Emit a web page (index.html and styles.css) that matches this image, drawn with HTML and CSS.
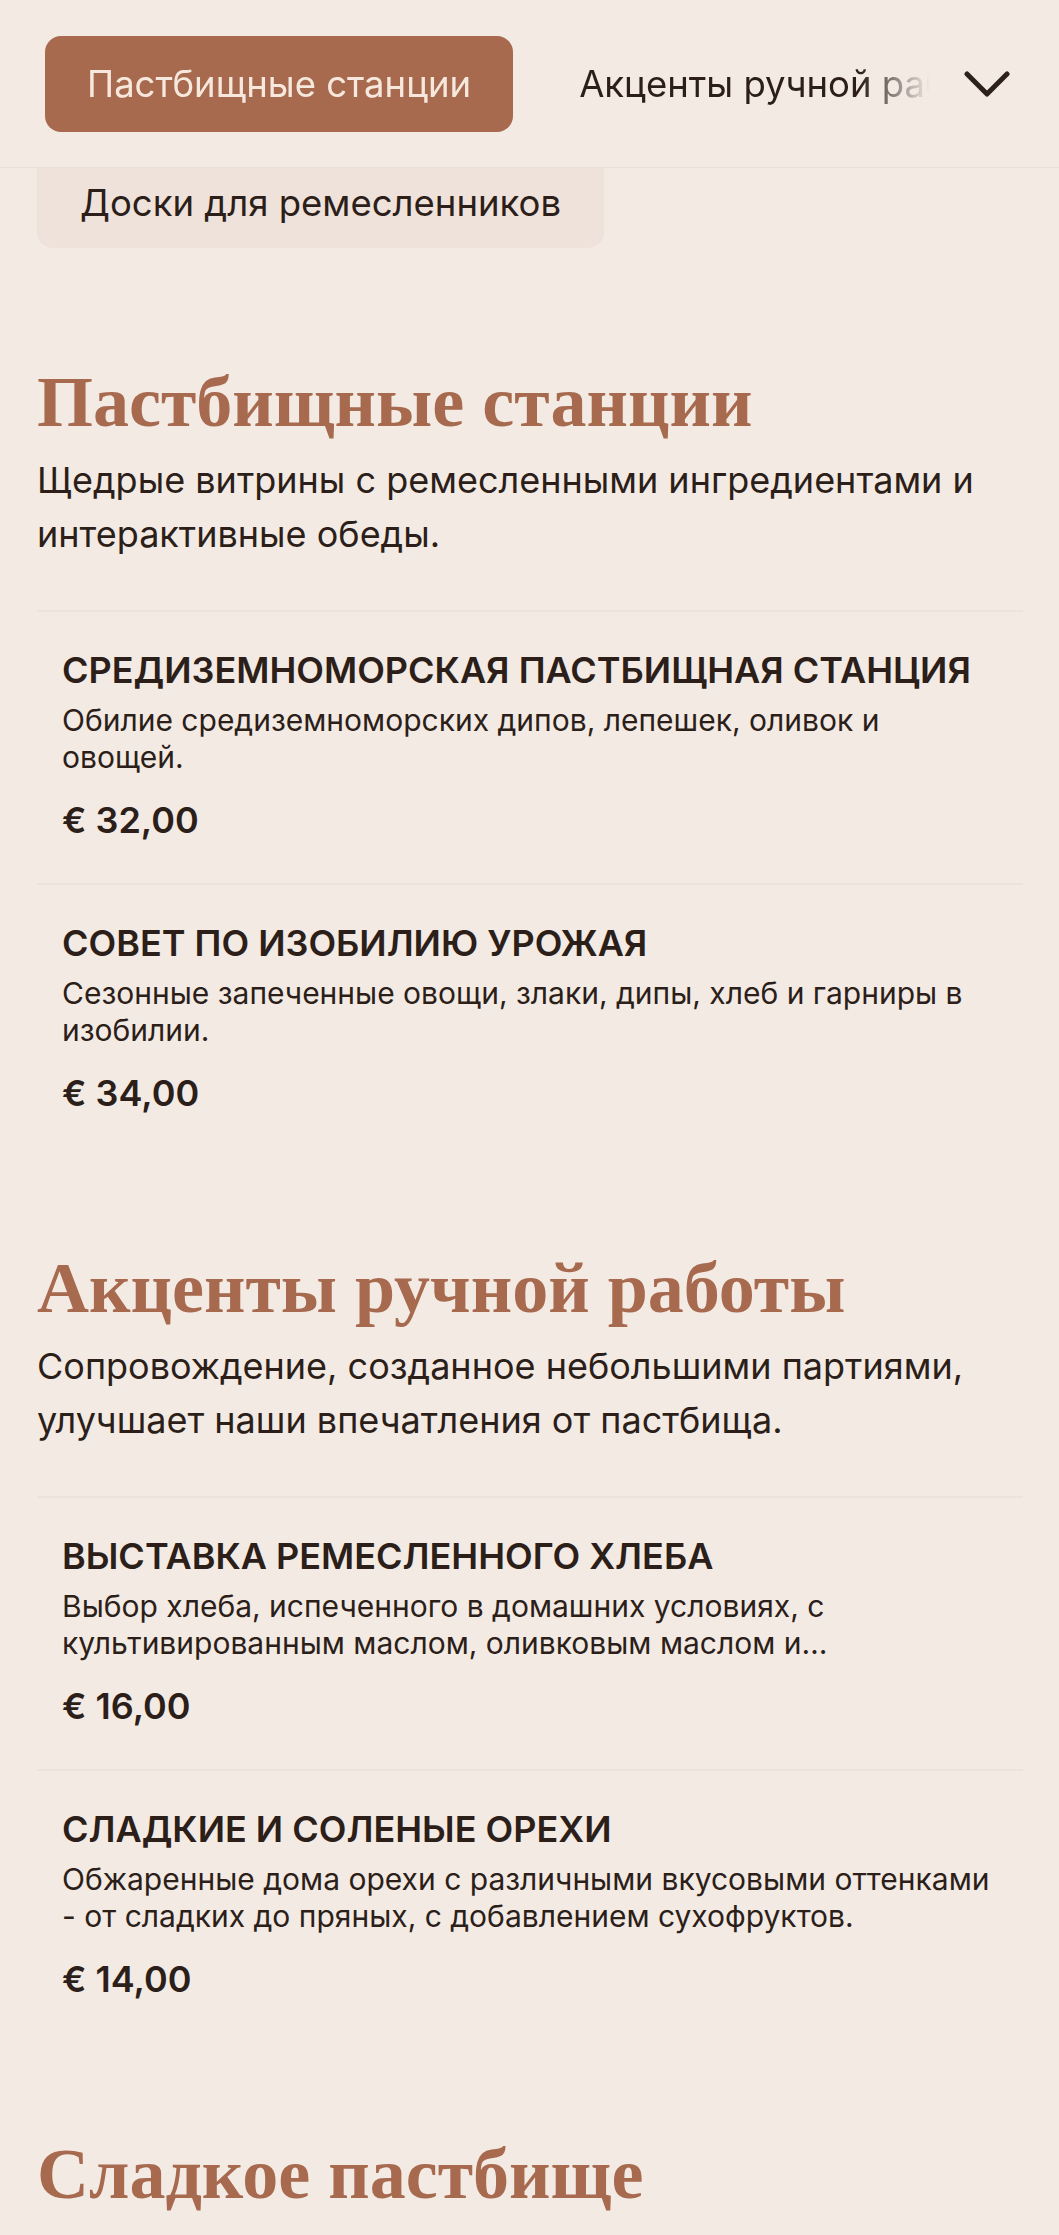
FILE: index.html
```html
<!DOCTYPE html>
<html lang="ru">
<head>
<meta charset="utf-8">
<title>Меню</title>
<link rel="stylesheet" href="styles.css">
</head>
<body>
<header class="topbar">
  <nav class="tabs">
    <a class="tab tab-active">Пастбищные станции</a>
    <a class="tab">Акценты ручной работы</a>
    <a class="tab">Сладкое пастбище</a>
  </nav>
  <button class="chevron" aria-label="Все категории">
    <svg width="46" height="28" viewBox="0 0 46 28"><polyline points="3,4 23,24 43,4" fill="none" stroke="#2e211c" stroke-width="5" stroke-linecap="round" stroke-linejoin="round"/></svg>
  </button>
</header>
<div class="dropdown">
  <a class="dropdown-item">Доски для ремесленников</a>
</div>
<main class="menu">
  <section class="section">
    <h2 class="section-title">Пастбищные станции</h2>
    <p class="section-desc">Щедрые витрины с ремесленными ингредиентами и интерактивные обеды.</p>
    <ul class="items">
      <li class="item">
        <h3 class="item-title">Средиземноморская пастбищная станция</h3>
        <p class="item-desc">Обилие средиземноморских дипов, лепешек, оливок и овощей.</p>
        <p class="item-price">€ 32,00</p>
      </li>
      <li class="item">
        <h3 class="item-title">Совет по изобилию урожая</h3>
        <p class="item-desc">Сезонные запеченные овощи, злаки, дипы, хлеб и гарниры в изобилии.</p>
        <p class="item-price">€ 34,00</p>
      </li>
    </ul>
  </section>
  <section class="section">
    <h2 class="section-title">Акценты ручной работы</h2>
    <p class="section-desc">Сопровождение, созданное небольшими партиями, улучшает наши впечатления от пастбища.</p>
    <ul class="items">
      <li class="item">
        <h3 class="item-title">Выставка ремесленного хлеба</h3>
        <p class="item-desc clamp">Выбор хлеба, испеченного в домашних условиях, с культивированным маслом, оливковым маслом и бальзамическим уксусом.</p>
        <p class="item-price">€ 16,00</p>
      </li>
      <li class="item">
        <h3 class="item-title">Сладкие и соленые орехи</h3>
        <p class="item-desc">Обжаренные дома орехи с различными вкусовыми оттенками - от сладких до пряных, с добавлением сухофруктов.</p>
        <p class="item-price">€ 14,00</p>
      </li>
    </ul>
  </section>
  <section class="section">
    <h2 class="section-title">Сладкое пастбище</h2>
  </section>
</main>
</body>
</html>
```
FILE: styles.css
```css
* { box-sizing: border-box; }
html, body { margin: 0; padding: 0; }
body {
  background: #f3eae4;
  color: #2c1e19;
  font-family: Inter, "Noto Sans", sans-serif;
  overflow: hidden;
}
.topbar {
  display: flex;
  align-items: center;
  height: 168px;
  padding: 0 49px 0 45px;
  border-bottom: 1px solid #ebdfd8;
  background: #f3eae4;
}
.tabs {
  flex: 1;
  display: flex;
  gap: 24px;
  overflow: hidden;
  white-space: nowrap;
  -webkit-mask-image: linear-gradient(to right, #000 calc(100% - 84px), transparent calc(100% - 14px));
  mask-image: linear-gradient(to right, #000 calc(100% - 84px), transparent calc(100% - 14px));
  margin-right: 20px;
}
.tab {
  flex: none;
  display: flex;
  align-items: center;
  height: 96px;
  padding: 0 42px;
  border-radius: 16px;
  font-size: 36.5px;
  color: #2c1e19;
}
.tab-active {
  background: #a76a4f;
  color: #f7e8de;
}
.chevron {
  flex: none;
  border: 0;
  background: none;
  padding: 0;
  width: 46px;
  height: 28px;
  display: flex;
}
.dropdown {
  padding-left: 37px;
}
.dropdown-item {
  display: inline-block;
  padding: 0 43px 10px;
  line-height: 70px;
  font-size: 36.5px;
  background: #efe2db;
  border-radius: 0 0 16px 16px;
}
.menu {
  padding: 22px 36px 0 37px;
}
.section { padding-top: 92px; }
.section-title {
  margin: 0;
  font-family: "Liberation Serif", "Times New Roman", serif;
  font-weight: 700;
  font-size: 72px;
  line-height: 80px;
  color: #a76a4f;
}
.section-desc {
  margin: 11px 0 0;
  font-size: 36px;
  line-height: 54px;
}
.items {
  list-style: none;
  margin: 49px 0 0;
  padding: 0;
}
.item {
  border-top: 2px solid #ede2dc;
  padding: 36px 25px 41px;
}
.item-title {
  margin: 0 0 10px;
  font-size: 36px;
  line-height: 44px;
  font-weight: 600;
  text-transform: uppercase;
}
.item-desc {
  margin: 0;
  font-size: 30px;
  line-height: 37px;
}
.clamp {
  display: -webkit-box;
  -webkit-line-clamp: 2;
  -webkit-box-orient: vertical;
  overflow: hidden;
}
.item-price {
  margin: 22px 0 0;
  font-size: 36px;
  line-height: 44px;
  font-weight: 600;
}
```
